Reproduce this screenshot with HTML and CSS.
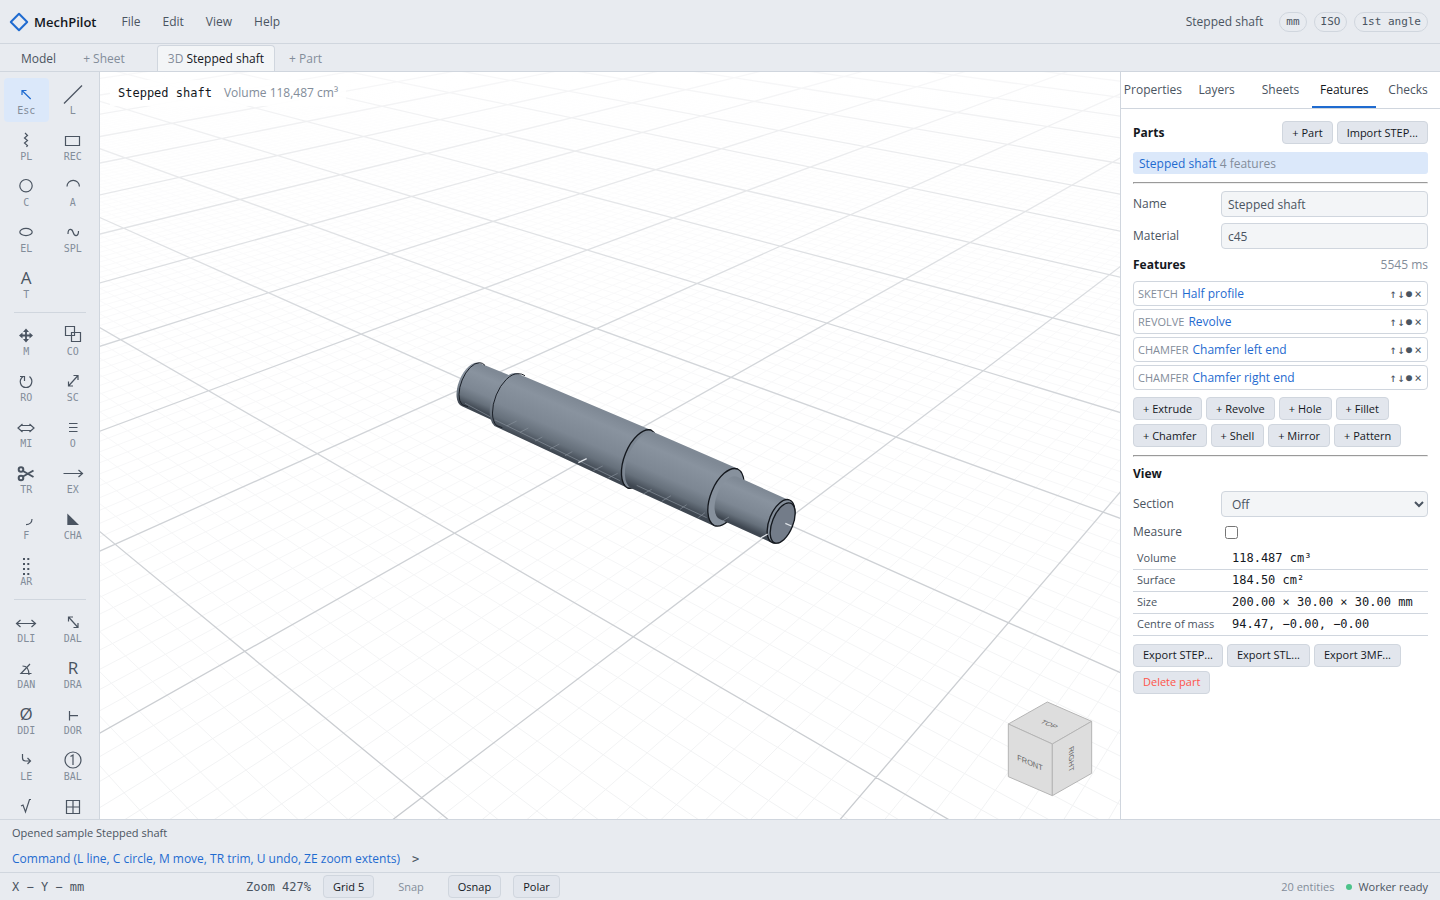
FILE: index.html
```html
<!DOCTYPE html>
<html lang="en">
<head>
<meta charset="utf-8">
<title>MechPilot</title>
<link rel="stylesheet" href="styles.css">
</head>
<body>
<div class="app">
  <header class="topbar">
    <svg class="logo" viewBox="0 0 20 20"><path d="M10 1.8 18.2 10 10 18.2 1.8 10Z"/></svg>
    <strong class="brand">MechPilot</strong>
    <nav class="menu"><button>File</button><button>Edit</button><button>View</button><button>Help</button></nav>
    <span class="doc-name">Stepped shaft</span>
    <span class="pill">mm</span><span class="pill">ISO</span><span class="pill">1st angle</span>
  </header>
  <nav class="tabs">
    <button class="tab">Model</button>
    <button class="tab add">+ Sheet</button>
    <button class="tab active"><span>3D</span> Stepped shaft</button>
    <button class="tab add">+ Part</button>
  </nav>
  <main class="work">
    <aside class="tools">
      <button class="tool on"><svg viewBox="0 0 30 22"><path d="M19.7 16 11 7.5M11 12V7.5h4.5"/></svg>Esc</button>
      <button class="tool"><svg viewBox="0 0 30 22"><path d="M24 2.5 6 20.5"/></svg>L</button>
      <button class="tool"><svg viewBox="0 0 30 22"><path d="M14 4l2.500 2.500-3 2.500 3 2.500-3 2.500 3 2.500-1 1.500"/></svg>PL</button>
      <button class="tool"><svg viewBox="0 0 30 22"><path d="M7.5 7.5h14v9h-14z"/></svg>REC</button>
      <button class="tool"><svg viewBox="0 0 30 22"><circle cx="15" cy="10.7" r="6.2"/></svg>C</button>
      <button class="tool"><svg viewBox="0 0 30 22"><path d="M9 11.5a6.2 6.2 0 0 1 12.4 0"/></svg>A</button>
      <button class="tool"><svg viewBox="0 0 30 22"><ellipse cx="15" cy="11" rx="6.2" ry="3.6"/></svg>EL</button>
      <button class="tool"><svg viewBox="0 0 30 22"><path d="M10 13c0-6 4-5.600 5.200-1.500s5.300 4.500 5.300-1.500"/></svg>SPL</button>
      <button class="tool"><svg viewBox="0 0 30 22"><text x="15" y="17">A</text></svg>T</button>
      <hr>
      <button class="tool"><svg viewBox="0 0 30 22"><path stroke-width="1.800" d="M15 7v9M10.500 11.500h9"/><path class="fill" d="M15 4.500l3 3.500h-6zM15 18.500l3-3.500h-6zM8 11.500l3.500-3v6zM22 11.500l-3.500-3v6z"/></svg>M</button>
      <button class="tool"><svg viewBox="0 0 30 22"><path d="M7.500 2.500h9v9h-9zM13.500 8.500h9v9h-9z"/></svg>CO</button>
      <button class="tool"><svg viewBox="0 0 30 22"><path d="M18.500 6.500c4.500 4 2 11-3.500 11s-8-7-3-11M9 6.500h4.500v4.500"/></svg>RO</button>
      <button class="tool"><svg viewBox="0 0 30 22"><path d="M10.500 16 20 5.500M15.500 5.500H20V10M10.500 11.500V16H15"/></svg>SC</button>
      <button class="tool"><svg viewBox="0 0 30 22"><path d="M9.500 9.500h11M9.500 14.500h11M11.500 8 7 12l4.500 4M18.500 8l4.500 4-4.500 4"/></svg>MI</button>
      <button class="tool"><svg viewBox="0 0 30 22"><path d="M11 7.500h8.500M11 11.500h8.500M11 15.500h8.500"/></svg>O</button>
      <button class="tool"><svg viewBox="0 0 30 22"><g class="bold"><circle cx="10" cy="7.500" r="2.300"/><circle cx="10" cy="16" r="2.300"/><path d="M12 9l10.500 6M12 14.500l10.500-6"/></g></svg>TR</button>
      <button class="tool"><svg viewBox="0 0 30 22"><path d="M5.500 11.500h19M20.500 8l4 3.500-4 3.500"/></svg>EX</button>
      <button class="tool"><svg viewBox="0 0 30 22"><path d="M21 11c0 3.500-2.500 5.700-6 5.700"/></svg>F</button>
      <button class="tool"><svg viewBox="0 0 30 22"><path class="fill" d="M9.300 5.500v11.500h11.700z"/></svg>CHA</button>
      <button class="tool"><svg viewBox="0 0 30 22"><path class="dots" d="M13 4v18M17.300 4v18"/></svg>AR</button>
      <hr>
      <button class="tool"><svg viewBox="0 0 30 22"><path d="M5.500 12.500h19M9.500 9l-4 3.500 4 3.500M20.500 9l4 3.500-4 3.500"/></svg>DLI</button>
      <button class="tool"><svg viewBox="0 0 30 22"><path d="M10.500 6 20 16.500M10.500 10.500V6H15M15.500 16.500H20V12"/></svg>DAL</button>
      <button class="tool"><svg viewBox="0 0 30 22"><path d="M19 7 10 16.500h10.500M11.500 9c4 0 6.500 3.500 6.500 9"/></svg>DAN</button>
      <button class="tool"><svg viewBox="0 0 30 22"><text x="15" y="17">R</text></svg>DRA</button>
      <button class="tool"><svg viewBox="0 0 30 22"><text x="15" y="17">Ø</text></svg>DDI</button>
      <button class="tool"><svg viewBox="0 0 30 22"><path d="M11.500 8v9.500M11.500 12.700H20"/></svg>DOR</button>
      <button class="tool"><svg viewBox="0 0 30 22"><path d="M11.500 5v4q0 3 3 3h5M16.500 9l3 3-3 3"/></svg>LE</button>
      <button class="tool"><svg viewBox="0 0 30 22"><circle cx="15" cy="11" r="8"/><path d="M12.500 7.500l2.500-1.500v10"/></svg>BAL</button>
      <button class="tool" aria-label="Surface finish"><svg viewBox="0 0 30 22"><path d="M10 11l2-1 2.500 7L18.500 4.500h1.500"/></svg></button>
      <button class="tool" aria-label="Table"><svg viewBox="0 0 30 22"><path d="M8.500 5.500h13v13h-13zM15 5.500v13M8.500 12h13"/></svg></button>
    </aside>
    <section class="viewport">
      <svg class="scene" viewBox="0 0 1020 747" preserveAspectRatio="xMidYMid slice">
        <defs>
          <linearGradient id="major" gradientUnits="userSpaceOnUse" x1="0" y1="0" x2="0" y2="747"><stop offset="0" stop-color="#f8f8f9"/><stop offset=".12" stop-color="#eaebed"/><stop offset=".35" stop-color="#d3d6da"/><stop offset="1" stop-color="#c8cbcf"/></linearGradient>
          <linearGradient id="minor" gradientUnits="userSpaceOnUse" x1="0" y1="0" x2="0" y2="747"><stop offset="0" stop-color="#fff"/><stop offset=".3" stop-color="#f9f9fa"/><stop offset="1" stop-color="#f1f2f3"/></linearGradient>
          <linearGradient id="steel"><stop offset="0" stop-color="#7f8995"/><stop offset=".2" stop-color="#89939f"/><stop offset=".6" stop-color="#7d8793"/><stop offset=".82" stop-color="#66707b"/><stop offset="1" stop-color="#3f4751"/></linearGradient>
          <linearGradient id="s1" href="#steel" gradientUnits="userSpaceOnUse" x1="155" y1="93" x2="105" y2="207"/>
          <linearGradient id="s2" href="#steel" gradientUnits="userSpaceOnUse" x1="434" y1="192" x2="366" y2="348"/>
          <linearGradient id="s3" href="#steel" gradientUnits="userSpaceOnUse" x1="761" y1="340" x2="695" y2="490"/>
          <linearGradient id="s4" href="#steel" gradientUnits="userSpaceOnUse" x1="970" y1="451" x2="920" y2="567"/>
        </defs>
        <path id="gridMinor" stroke="url(#minor)" fill="none"/>
        <path id="gridMajor" stroke="url(#major)" fill="none" stroke-width="1.300"/>
        <g transform="translate(340 268) scale(.33333)" stroke="none">
          <path d="M118 69A70 36 -68 0 0 66 199L170 247 240 119Z" fill="url(#s1)"/>
          <path class="edge" d="M135 76Q128 68 118 68A70 36 -68 0 0 66 194L84 200"/>
          <path d="M234 101A86 45 -68 0 0 170 261L563 444 633 270Z" fill="url(#s2)"/>
          <path class="edge" d="M255 107Q246 101 234 101A86 45 -68 0 0 170 257L187 263"/>
          <path class="edge thick" d="M633 270A94 48 -68 0 0 563 444A94 48 -68 0 0 633 270Z" style="fill:#7d8793"/>
          <path d="M640 276A91 47 -68 0 0 572 444L822 558 894 386Z" fill="url(#s3)"/>
          <path class="edge thick" d="M893 387A92 48 -68 0 0 823 557A92 48 -68 0 0 893 387Z" style="fill:#87919d"/>
          <path d="M892 410A69 36 -68 0 0 840 538L990 606 1048 481Z" fill="url(#s4)"/>
          <ellipse class="edge thick" cx="1023" cy="544" rx="69" ry="35" transform="rotate(-68 1023 544)" style="fill:#858f9b"/>
          <ellipse class="edge thick" cx="1028" cy="549" rx="64" ry="31" transform="rotate(-68 1028 549)" style="fill:#737c89"/>
          <path stroke="#88919b" stroke-width="2" fill="none" d="M75 190 150 230M165 240 540 422M590 436 800 533M200 258l30-15M240 277l25-13M285 303l22-12M330 327l28-15M375 347l22-12M460 392l28-14M505 414l28-14M610 462l25-14M665 484l28-17M720 508l20-14M775 533l20-15M845 545l22-14"/>
          <path d="M415 368 440 356M1036 550 1054 558M962 594 983 582" stroke="#dfe3e8" stroke-width="4"/>
        </g>
        <g class="cube" transform="translate(880 608) scale(.33333)">
          <path d="M202 66 335 124 217 192 85 132Z"/><path d="M85 132 217 192 217 347 85 290Z"/><path d="M217 192 335 124 335 280 217 347Z"/>
          <text transform="matrix(.92 .4 -.75 .5 206 134)">TOP</text>
          <text transform="matrix(.92 .4 0 1 150 250)">FRONT</text>
          <text transform="matrix(0 1 -.86 .5 272 238)">RIGHT</text>
        </g>
      </svg>
      <div class="caption"><strong>Stepped shaft</strong><span>Volume 118,487 cm³</span></div>
    </section>
    <aside class="panel">
      <nav class="ptabs"><button>Properties</button><button>Layers</button><button>Sheets</button><button class="active">Features</button><button>Checks</button></nav>
      <div class="pbody">
        <div class="head"><h3>Parts</h3><button class="btn">+ Part</button><button class="btn">Import STEP...</button></div>
        <button class="part">Stepped shaft <span>4 features</span></button>
        <hr>
        <div class="field"><label for="name">Name</label><input id="name" value="Stepped shaft"></div>
        <div class="field"><label for="mat">Material</label><input id="mat" value="c45"></div>
        <div class="head feat"><h3>Features</h3><span>5545 ms</span></div>
        <ul class="list">
          <li><small>SKETCH</small><a href="#">Half profile</a><button>↑</button><button>↓</button><button class="dot">●</button><button>×</button></li>
          <li><small>REVOLVE</small><a href="#">Revolve</a><button>↑</button><button>↓</button><button class="dot">●</button><button>×</button></li>
          <li><small>CHAMFER</small><a href="#">Chamfer left end</a><button>↑</button><button>↓</button><button class="dot">●</button><button>×</button></li>
          <li><small>CHAMFER</small><a href="#">Chamfer right end</a><button>↑</button><button>↓</button><button class="dot">●</button><button>×</button></li>
        </ul>
        <div class="btns"><button class="btn">+ Extrude</button><button class="btn">+ Revolve</button><button class="btn">+ Hole</button><button class="btn">+ Fillet</button><button class="btn">+ Chamfer</button><button class="btn">+ Shell</button><button class="btn">+ Mirror</button><button class="btn">+ Pattern</button></div>
        <hr>
        <h3 class="view">View</h3>
        <div class="field"><label for="sec">Section</label><select id="sec"><option>Off</option></select></div>
        <div class="field check"><label for="meas">Measure</label><input type="checkbox" id="meas"></div>
        <table>
          <tr><th>Volume</th><td>118.487 cm³</td></tr>
          <tr><th>Surface</th><td>184.50 cm²</td></tr>
          <tr><th>Size</th><td>200.00 × 30.00 × 30.00 mm</td></tr>
          <tr><th>Centre of mass</th><td>94.47, −0.00, −0.00</td></tr>
        </table>
        <div class="btns"><button class="btn">Export STEP...</button><button class="btn">Export STL...</button><button class="btn">Export 3MF...</button><button class="btn danger">Delete part</button></div>
      </div>
    </aside>
  </main>
  <section class="console">
    <div class="log">Opened sample Stepped shaft</div>
    <label class="cmd">Command (L line, C circle, M move, TR trim, U undo, ZE zoom extents) <b>&gt;</b><input aria-label="Command"></label>
  </section>
  <footer class="status">
    <span class="coords">X − Y − mm</span><span class="zoom">Zoom 427%</span>
    <button class="btn">Grid 5</button><button class="btn off">Snap</button><button class="btn">Osnap</button><button class="btn">Polar</button>
    <span class="count">20 entities</span><span class="worker"><i></i>Worker ready</span>
  </footer>
</div>
<script src="grid.js"></script>
</body>
</html>
```

FILE: styles.css
```css
* { box-sizing: border-box; }
body { margin: 0; background: #e8ebf0; color: #4a5461; font: 12px/18px "Open Sans", "Noto Sans", sans-serif; }
button, input, select { font: inherit; color: inherit; }
button { background: none; border: 0; padding: 0; }
h3 { margin: 0; font-size: 12px; font-weight: 700; color: #14181e; }
.app { height: 100vh; display: flex; flex-direction: column; }

.topbar { flex: none; height: 44px; display: flex; align-items: center; padding: 0 12px 0 9px; border-bottom: 1px solid #d0d6de; }
.logo { width: 20px; height: 20px; fill: none; stroke: #1f6bd0; stroke-width: 2; stroke-linejoin: round; }
.brand { margin-left: 5px; font-size: 13px; font-weight: 600; color: #14181e; }
.menu { display: flex; gap: 22px; margin-left: 25px; flex: 1; }
.pill { font: 11px/18px "DejaVu Sans Mono", monospace; border: 1px solid #d0d6de; border-radius: 10px; padding: 0 6px; margin-left: 7px; }
.doc-name { margin-right: 9px; }

.tabs { flex: none; height: 28px; display: flex; align-items: flex-end; padding-left: 8px; border-bottom: 1px solid #d0d6de; }
.tab { height: 26px; padding: 0 12px; border: 1px solid transparent; border-bottom: 0; }
.tab.add { color: #838d9a; padding: 0 13px; }
.tab.active { margin-left: 18px; padding: 0 10px; color: #14181e; background: #f3f5f7; border-color: #d0d6de; border-radius: 4px 4px 0 0; }
.tab.active span { color: #838d9a; }

.work { flex: 1; min-height: 0; display: flex; }
.tools { flex: none; width: 100px; padding: 6px 4px; display: grid; grid-template-columns: 1fr 1fr; grid-auto-rows: min-content; gap: 2px; overflow: hidden; border-right: 1px solid #d0d6de; }
.tools hr { grid-column: 1 / 3; width: 72px; height: 1px; margin: 4px auto; border: 0; background: #d0d6de; }
.tool { height: 44px; padding-top: 5px; display: flex; flex-direction: column; align-items: center; border-radius: 4px; font: 10px/12px "DejaVu Sans Mono", monospace; color: #838d9a; }
.tool svg { flex: none; width: 30px; height: 22px; fill: none; stroke: #4a5461; stroke-width: 1.2; }
.tool text { font: 17px "Open Sans", sans-serif; fill: #4a5461; stroke: none; text-anchor: middle; }
.tool .fill { fill: #4a5461; stroke: none; }
.tool .bold { stroke-width: 2; }
.tool .dots { stroke-width: 2; stroke-dasharray: 2 3; }
.tool.on { background: #dbe8fa; }
.tool.on svg { stroke: #1f6bd0; }

.viewport { flex: 1; min-width: 0; position: relative; background: #fff; overflow: hidden; }
.scene { display: block; width: 100%; height: 100%; }
.edge { fill: none; stroke: #1b2028; stroke-width: 3; }
.thick { stroke: #14181e; stroke-width: 4; }
.cube path { fill: #dddddd; stroke: #b5b5b5; stroke-width: 3; }
.cube text { font: 24px "Liberation Sans", sans-serif; fill: #666; text-anchor: middle; dominant-baseline: middle; }
.caption { position: absolute; left: 10px; top: 8px; padding: 4px 8px; display: flex; gap: 12px; background: rgba(255, 255, 255, .85); }
.caption strong { font: 12px/18px "DejaVu Sans Mono", monospace; color: #14181e; }
.caption span { color: #838d9a; }

.panel { flex: none; width: 320px; background: #fff; border-left: 1px solid #d0d6de; overflow: hidden; }
.ptabs { height: 37px; display: grid; grid-template-columns: repeat(5, minmax(0, 1fr)); border-bottom: 1px solid #d0d6de; }
.ptabs button { padding-top: 2px; border-bottom: 2px solid transparent; white-space: nowrap; }
.ptabs .active { color: #14181e; border-color: #1f6bd0; }
.pbody { padding: 12px; }
.pbody hr { margin: 8px 0 7px; }
.head { display: flex; align-items: center; gap: 4px; }
.head h3 { flex: 1; }
.head span { color: #838d9a; }
.btn { height: 23px; padding: 0 9px; font-size: 11px; line-height: 16px; color: #14181e; background: #e2e6ed; border: 1px solid #d0d6de; border-radius: 4px; }
.part { display: block; width: 100%; height: 22px; margin-top: 8px; padding: 1px 6px 0; text-align: left; border-radius: 3px; background: #dbe8fa; color: #1f6bd0; }
.part span { color: #838d9a; }
.field { display: flex; align-items: center; margin-bottom: 6px; }
.field label { width: 88px; }
.field input, .field select { flex: 1; min-width: 0; height: 26px; padding: 0 6px; border: 1px solid #d0d6de; border-radius: 4px; background: #f3f5f7; }
.field.check input { flex: none; width: 13px; height: 13px; margin: 0 4px; }
.feat { height: 18px; padding-top: 2px; }
.list { list-style: none; margin: 8px 0 7px; padding: 0; display: grid; gap: 3px; }
.list li { height: 25px; display: flex; align-items: center; padding: 0 4px; border: 1px solid #d0d6de; border-radius: 4px; }
.list small { font-size: 11px; color: #838d9a; margin-right: 4px; }
.list a { flex: 1; color: #1f6bd0; text-decoration: none; }
.list button { width: 8px; font: 12px/16px "DejaVu Sans Mono", monospace; display: flex; justify-content: center; }
.list .dot { font-size: 10px; }
.list button:last-child { margin: 0 1px; }
.btns { display: flex; flex-wrap: wrap; gap: 4px; }
.view { margin: 8px 0; }
table { width: 100%; border-collapse: collapse; margin-bottom: 8px; }
th, td { height: 22px; padding: 2px 4px; line-height: 16px; border-bottom: 1px solid #d0d6de; text-align: left; white-space: nowrap; }
th { width: 95px; font-size: 11px; font-weight: 400; }
td { font: 12px/16px "DejaVu Sans Mono", monospace; color: #14181e; }
.danger { color: #ff5449; }

.console { flex: none; height: 53px; padding: 4px 12px; border-top: 1px solid #d0d6de; }
.log { font-size: 11px; }
.cmd { display: flex; margin-top: 8px; color: #1f6bd0; }
.cmd b { margin-left: 12px; font: 12px/18px "DejaVu Sans Mono", monospace; color: #4a5461; }
.cmd input { flex: 1; border: 0; padding: 0 6px; height: 18px; background: none; outline: 0; }
.status { flex: none; height: 28px; display: flex; align-items: center; gap: 12px; padding: 0 12px; border-top: 1px solid #d0d6de; font-size: 11px; }
.coords, .zoom { font: 12px/18px "DejaVu Sans Mono", monospace; }
.coords { width: 222px; }
.status .off { background: none; border-color: transparent; color: #838d9a; padding: 0 11px; }
.count { margin-left: auto; color: #838d9a; }
.worker i { display: inline-block; width: 6px; height: 6px; margin-right: 6px; border-radius: 3px; background: #4cc38a; vertical-align: 1px; }
```

FILE: grid.js
```js
// Ground plane to screen projection; one unit is a 100 mm grid cell.
var H = [182.80981, -85.9528, 108.63768, -26.20438, -23.14043, 318.73975, 0.11625, 0.10424];

function depth(i, j) { return H[6] * i + H[7] * j + 1; }

function project(i, j) {
  var d = depth(i, j);
  return ((H[0] * i + H[1] * j + H[2]) / d).toFixed(1) + ' ' + ((H[3] * i + H[4] * j + H[5]) / d).toFixed(1);
}

// Clips the segment to the part in front of the camera.
function line(i0, j0, i1, j1) {
  var a = depth(i0, j0), b = depth(i1, j1), near = 0.08, t;
  if (a < near && b < near) return '';
  if (a < near) { t = (near - a) / (b - a); i0 += t * (i1 - i0); j0 += t * (j1 - j0); }
  else if (b < near) { t = (near - b) / (a - b); i1 += t * (i0 - i1); j1 += t * (j0 - j1); }
  return 'M' + project(i0, j0) + 'L' + project(i1, j1);
}

var major = '', minor = '';
for (var n = -100; n <= 200; n++) {
  var s = line(n / 10, -10, n / 10, 20) + line(-10, n / 10, 20, n / 10);
  if (n % 10) minor += s; else major += s;
}
document.getElementById('gridMinor').setAttribute('d', minor);
document.getElementById('gridMajor').setAttribute('d', major);
```
